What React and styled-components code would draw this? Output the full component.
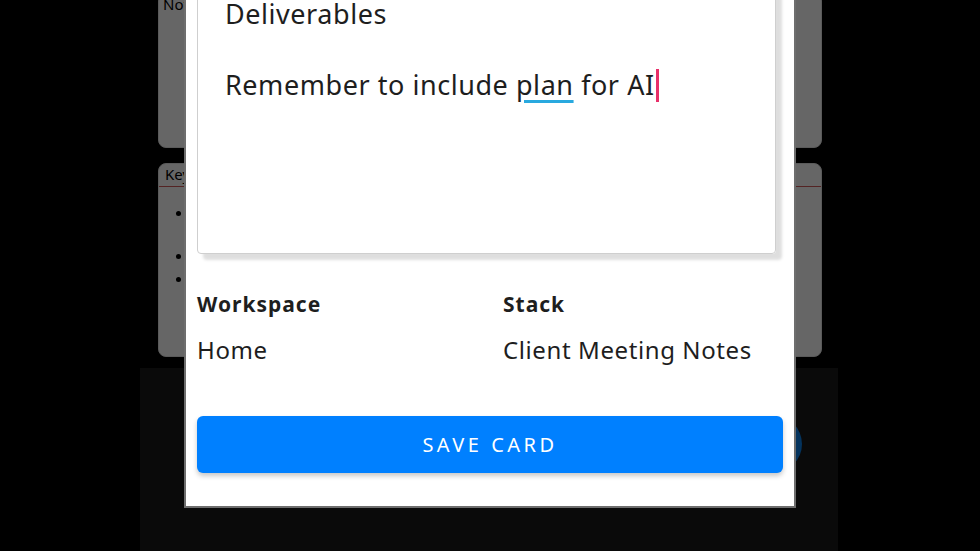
import React from "react";
import styled, { createGlobalStyle } from "styled-components";

const GlobalStyle = createGlobalStyle`
  html, body {
    margin: 0;
    padding: 0;
    background: #000;
    height: 551px;
    overflow: hidden;
  }
  body {
    font-family: "Noto Sans", "Liberation Sans", sans-serif;
  }
`;

const App = () => {
  return (
    <>
      <GlobalStyle />
      <Screen>
        <CardList>
          <NoteCard $height={155}>
            <CardBody>Notes from the kickoff call</CardBody>
          </NoteCard>
          <NoteCard $height={194}>
            <CardTitle>Key points</CardTitle>
            <Bullets>
              <li>Timeline agreed with the client for the first phase</li>
              <li>Budget review</li>
              <li>Next meeting</li>
            </Bullets>
          </NoteCard>
        </CardList>
        <BottomBar />
        <Fab />
        <Backdrop />
        <Modal>
          <Editor>
            <Line>Deliverables</Line>
            <Line>&nbsp;</Line>
            <Line>
              Remember to include <Spell>plan</Spell> for AI
              <Caret />
            </Line>
          </Editor>
          <Fields>
            <Label>Workspace</Label>
            <Label>Stack</Label>
            <Value>Home</Value>
            <Value>Client Meeting Notes</Value>
          </Fields>
          <SaveButton>Save Card</SaveButton>
        </Modal>
      </Screen>
    </>
  );
};

const Screen = styled.div`
  position: relative;
  width: 698px;
  height: 551px;
  margin-left: 140px;
  display: grid;
  grid-template-rows: 368px 1fr;
  background: #000;
  overflow: hidden;
`;

const CardList = styled.div`
  display: flex;
  flex-direction: column;
  justify-content: flex-end;
  gap: 15px;
  padding: 0 16px 11px 18px;
  overflow: hidden;
`;

const NoteCard = styled.div`
  flex: 0 0 ${(p) => p.$height}px;
  background: #fff;
  border: 1px solid #e0e0e0;
  border-radius: 8px;
  box-sizing: border-box;
  overflow: hidden;
`;

const CardTitle = styled.div`
  padding: 0 6px 1px;
  font-size: 15px;
  line-height: 21px;
  color: #000;
  border-bottom: 1px solid #d35a5a;
`;

const CardBody = styled.div`
  padding: 0 4px;
  font-size: 15px;
  color: #000;
`;

const Bullets = styled.ul`
  margin: 14px 0 0;
  padding-left: 34px;
  font-size: 15px;
  line-height: 23px;
  color: #000;
  li:first-child {
    margin-bottom: 20px;
  }
`;

const BottomBar = styled.div`
  background: #1a1a1a;
`;

const Fab = styled.div`
  position: absolute;
  left: 604px;
  top: 415px;
  width: 58px;
  height: 58px;
  border-radius: 50%;
  background: #0a80e8;
`;

const Backdrop = styled.div`
  position: absolute;
  inset: 0;
  background: rgba(0, 0, 0, 0.6);
`;

const Modal = styled.div`
  position: absolute;
  left: 44px;
  width: 612px;
  bottom: 43px;
  box-sizing: border-box;
  background: #fff;
  border: 2px solid #6e6e6e;
  border-top: none;
  padding: 0 11px 33px;
  display: flex;
  flex-direction: column;
  color: #1e1e1e;
`;

const Editor = styled.div`
  height: 300px;
  width: 579px;
  box-sizing: border-box;
  padding: 41px 27px 0;
  border: 1px solid #cfcfcf;
  border-radius: 4px;
  box-shadow: 6px 6px 3px rgba(0, 0, 0, 0.13);
  font-size: 27px;
  letter-spacing: 0.55px;
  line-height: 35.5px;
`;

const Line = styled.div`
  white-space: nowrap;
`;

const Spell = styled.span`
  text-decoration: underline;
  text-decoration-color: #29a9df;
  text-decoration-thickness: 3px;
  text-underline-offset: 5px;
`;

const Caret = styled.span`
  display: inline-block;
  width: 3px;
  height: 33px;
  margin-left: 1px;
  vertical-align: -7px;
  background: #e8306a;
`;

const Fields = styled.div`
  display: grid;
  grid-template-columns: 306px 1fr;
  row-gap: 18px;
  margin-top: 37px;
`;

const Label = styled.div`
  font-size: 21px;
  font-weight: 700;
  letter-spacing: 1px;
  line-height: 26px;
`;

const Value = styled.div`
  font-size: 24px;
  letter-spacing: 0.6px;
  line-height: 30px;
`;

const SaveButton = styled.button`
  margin-top: 51px;
  height: 57px;
  width: 100%;
  border: none;
  border-radius: 6px;
  background: #0080ff;
  color: #fff;
  font-family: "Noto Sans", "Liberation Sans", sans-serif;
  font-size: 20px;
  letter-spacing: 3.5px;
  text-transform: uppercase;
  box-shadow: 0 3px 5px rgba(0, 0, 0, 0.22);
`;

export default App;
